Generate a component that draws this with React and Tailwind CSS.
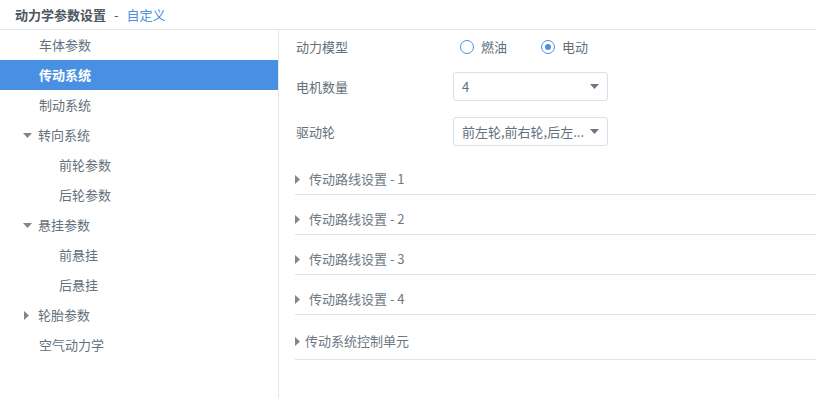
const FONT = "font-['Microsoft_YaHei','Noto_Sans_CJK_SC',sans-serif]";

const navItems = [
  { label: '车体参数', level: 0 },
  { label: '传动系统', level: 0, active: true },
  { label: '制动系统', level: 0 },
  { label: '转向系统', level: 0, caret: 'down' },
  { label: '前轮参数', level: 1 },
  { label: '后轮参数', level: 1 },
  { label: '悬挂参数', level: 0, caret: 'down' },
  { label: '前悬挂', level: 1 },
  { label: '后悬挂', level: 1 },
  { label: '轮胎参数', level: 0, caret: 'right' },
  { label: '空气动力学', level: 0 },
];

function CaretDown({ className = '' }) {
  return (
    <svg width="9" height="5" viewBox="0 0 9 5" className={className}>
      <path d="M0 0 L9 0 L4.5 5 Z" fill="#7b8793" />
    </svg>
  );
}

function CaretRight({ className = '' }) {
  return (
    <svg width="5" height="9" viewBox="0 0 5 9" className={className}>
      <path d="M0 0 L5 4.5 L0 9 Z" fill="#7b8793" />
    </svg>
  );
}

function Sidebar() {
  return (
    <div className="w-[279px] shrink-0 border-r border-[#e3e6ea]">
      {navItems.map((item) => (
        <div
          key={item.label}
          className={`h-[30px] flex items-center ${
            item.active ? 'bg-[#4a90e2] text-white font-bold' : 'text-[#64707b]'
          } ${item.level === 1 ? 'pl-[59px]' : item.caret ? 'pl-[23px]' : 'pl-[39px]'}`}
        >
          {item.caret === 'down' && <CaretDown className="mr-[6px]" />}
          {item.caret === 'right' && <CaretRight className="ml-[1px] mr-[9px]" />}
          <span>{item.label}</span>
        </div>
      ))}
    </div>
  );
}

function Radio({ checked, label }) {
  return (
    <div className="flex items-center">
      <span className="w-[14px] h-[14px] rounded-full border border-[#4a90e2] flex items-center justify-center bg-white">
        {checked && <span className="w-[6px] h-[6px] rounded-full bg-[#4a90e2]" />}
      </span>
      <span className="ml-[7px] text-[#64707b]">{label}</span>
    </div>
  );
}

function Select({ value }) {
  return (
    <div className="w-[155px] h-[29px] border border-[#dcdfe5] rounded-[3px] flex items-center pl-[8px] pr-[8px] text-[#64707b]">
      <span className="flex-1 whitespace-nowrap overflow-hidden">{value}</span>
      <svg width="9" height="5" viewBox="0 0 9 5" className="shrink-0">
        <path d="M0 0 L9 0 L4.5 5 Z" fill="#6b7682" />
      </svg>
    </div>
  );
}

function Collapse({ title, last }) {
  return (
    <div
      className={`flex items-end border-b border-[#e1e3e6] ${last ? 'h-[45px] pb-[8px]' : 'h-[40px] pb-[5px]'}`}
    >
      <div className="h-[20px] flex items-center text-[#6d7883]">
        <CaretRight className={last ? 'mr-[5px]' : 'mr-[9px]'} />
        <span>{title}</span>
      </div>
    </div>
  );
}

export default function App() {
  return (
    <div className={`w-[816px] h-[398px] bg-white flex flex-col text-[13px] leading-[20px] ${FONT}`}>
      {/* header */}
      <div className="h-[30px] shrink-0 border-b border-[#e3e6ea] flex items-center pl-[15px]">
        <span className="font-bold text-[#4d5761]">动力学参数设置</span>
        <span className="mx-[8px] text-[#4d5761]">-</span>
        <span className="text-[#4a90e2]">自定义</span>
      </div>

      <div className="flex flex-1 min-h-0">
        <Sidebar />

        <div className="flex-1 pl-[16px]">
          <div className="pl-[1px]">
            <div className="h-[28px] mt-[3px] flex items-center">
              <span className="w-[164px] text-[#64707b]">动力模型</span>
              <Radio label="燃油" />
              <div className="ml-[34px]">
                <Radio checked label="电动" />
              </div>
            </div>
            <div className="h-[29px] mt-[11px] flex items-center">
              <span className="w-[157px] text-[#64707b]">电机数量</span>
              <Select value="4" />
            </div>
            <div className="h-[29px] mt-[16px] flex items-center">
              <span className="w-[157px] text-[#64707b]">驱动轮</span>
              <Select value="前左轮,前右轮,后左..." />
            </div>
          </div>

          <div className="mt-[9px]">
            <Collapse title="传动路线设置 - 1" />
            <Collapse title="传动路线设置 - 2" />
            <Collapse title="传动路线设置 - 3" />
            <Collapse title="传动路线设置 - 4" />
            <Collapse title="传动系统控制单元" last />
          </div>
        </div>
      </div>
    </div>
  );
}
